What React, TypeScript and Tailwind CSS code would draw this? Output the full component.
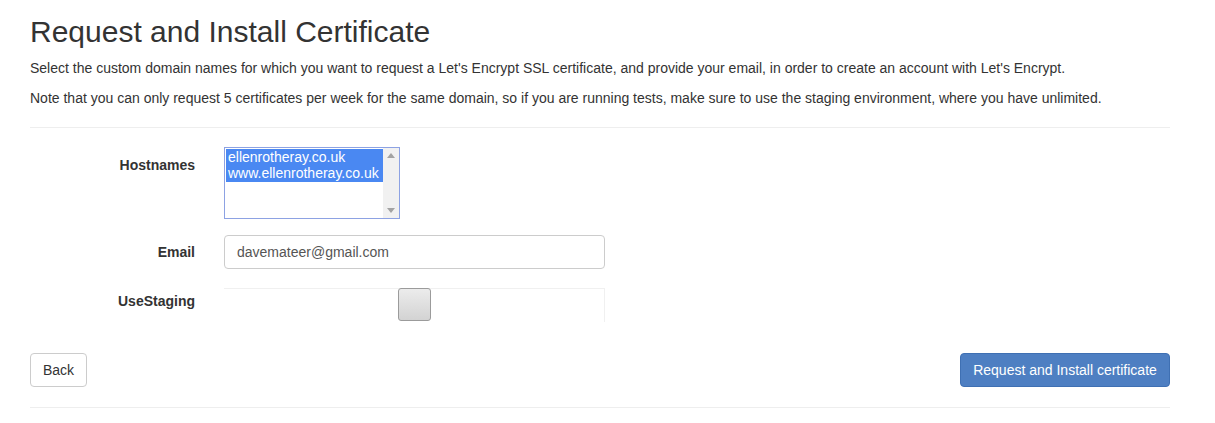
import React from "react";

export default function App() {
  return (
    <div
      className="w-[1215px] bg-white text-[#333] text-[14px] leading-[20px]"
      style={{ fontFamily: '"Liberation Sans", Arial, sans-serif' }}
    >
      <div className="ml-[30px] w-[1140px]">
        <h2 className="pt-[15px] text-[30px] leading-[33px] font-normal text-[#333] mb-[10px]">
          Request and Install Certificate
        </h2>
        <p className="mb-[10px]">
          Select the custom domain names for which you want to request a Let's Encrypt SSL certificate, and provide your email, in order to create an account with Let's Encrypt.
        </p>
        <p className="mb-[19px]">
          Note that you can only request 5 certificates per week for the same domain, so if you are running tests, make sure to use the staging environment, where you have unlimited.
        </p>
        <div className="border-t border-[#eee]" />

        <div className="pt-[19px]">
          {/* Hostnames */}
          <div className="flex">
            <div className="w-[165px] text-right font-bold pt-[8px]">Hostnames</div>
            <div className="ml-[29px]">
              <div className="w-[176px] h-[72px] border border-[#8da2e3] bg-white flex">
                <div className="flex-1 pt-[1px] pl-[1px]">
                  <div className="bg-[#4a88f2] text-white leading-[16px] pl-[2px] h-[16px]">ellenrotheray.co.uk</div>
                  <div className="bg-[#4a88f2] text-white leading-[17px] pl-[2px] h-[17px]">www.ellenrotheray.co.uk</div>
                </div>
                <div className="w-[16px] bg-[#f1f1f1] flex flex-col justify-between items-center py-[5px]">
                  <svg width="8" height="5" viewBox="0 0 8 5"><polygon points="4,0 8,5 0,5" fill="#a3a3a3" /></svg>
                  <svg width="8" height="5" viewBox="0 0 8 5"><polygon points="0,0 8,0 4,5" fill="#a3a3a3" /></svg>
                </div>
              </div>
            </div>
          </div>

          {/* Email */}
          <div className="flex mt-[16px]">
            <div className="w-[165px] text-right font-bold pt-[7px]">Email</div>
            <div className="ml-[29px]">
              <div className="w-[381px] h-[34px] border border-[#ccc] rounded-[4px] px-[12px] flex items-center text-[#555]">
                davemateer@gmail.com
              </div>
            </div>
          </div>

          {/* UseStaging */}
          <div className="flex mt-[19px]">
            <div className="w-[165px] text-right font-bold pt-[3px]">UseStaging</div>
            <div className="ml-[29px]">
              <div className="w-[381px] h-[34px] border-t border-r border-[#f0f0f0] flex justify-center">
                <div className="w-[33px] h-[33px] -mt-px rounded-[3px] border border-[#9b9b9b] bg-gradient-to-b from-[#ececec] to-[#d3d3d3]" />
              </div>
            </div>
          </div>
        </div>

        <div className="flex justify-between mt-[31px]">
          <button className="h-[34px] px-[12px] border border-[#ccc] rounded-[4px] bg-white text-[#333] text-[14px]">
            Back
          </button>
          <button className="h-[34px] w-[210px] border border-[#3f70b3] rounded-[4px] bg-[#4e7fc2] text-white text-[14px]">
            Request and Install certificate
          </button>
        </div>
        <div className="mt-[20px] border-t border-[#eee]" />
        <div className="h-[15px]" />
      </div>
    </div>
  );
}
